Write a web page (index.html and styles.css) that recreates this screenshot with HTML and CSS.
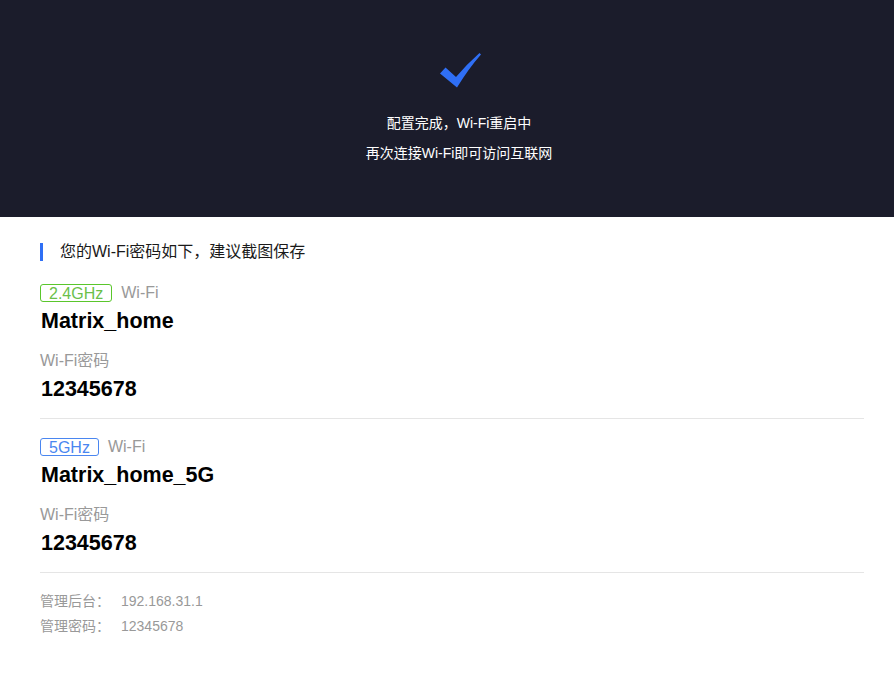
FILE: index.html
```html
<!DOCTYPE html>
<html lang="zh-CN">
<head>
<meta charset="utf-8">
<title>配置完成</title>
<link rel="stylesheet" href="styles.css">
</head>
<body>
<header class="hero">
  <svg class="check" width="44" height="40" viewBox="0 0 44 40">
    <path d="M1 21.5 L6.5 15.5 L17 25 Q28 12 40.5 1 L42 2.5 Q30 16 18 35.5 Z" fill="#2f6ff5"/>
  </svg>
  <p class="hero-line first">配置完成，Wi-Fi重启中</p>
  <p class="hero-line">再次连接Wi-Fi即可访问互联网</p>
</header>
<main class="content">
  <h2 class="title">您的Wi-Fi密码如下，建议截图保存</h2>
  <section class="group">
    <div class="band-row"><span class="badge green">2.4GHz</span><span class="band-label">Wi-Fi</span></div>
    <div class="big">Matrix_home</div>
    <div class="label">Wi-Fi密码</div>
    <div class="big pwd">12345678</div>
  </section>
  <section class="group">
    <div class="band-row"><span class="badge blue">5GHz</span><span class="band-label">Wi-Fi</span></div>
    <div class="big">Matrix_home_5G</div>
    <div class="label">Wi-Fi密码</div>
    <div class="big pwd">12345678</div>
  </section>
  <dl class="admin">
    <div class="admin-row"><dt>管理后台：</dt><dd>192.168.31.1</dd></div>
    <div class="admin-row"><dt>管理密码：</dt><dd>12345678</dd></div>
  </dl>
</main>
</body>
</html>
```
FILE: styles.css
```css
* { box-sizing: border-box; }
html, body { margin: 0; padding: 0; background: #fff; }
body { font-family: "Liberation Sans", Arial, "Noto Sans CJK SC", sans-serif; color: #000; }

.hero {
  height: 217px;
  background: #1b1c2b;
  display: flex;
  flex-direction: column;
  align-items: center;
  padding-top: 52px;
  padding-left: 24px;
}
.check { display: block; margin-left: 3px; }
.hero-line {
  margin: 0;
  color: #fff;
  font-size: 14px;
  line-height: 20px;
  height: 30px;
}
.hero-line.first { margin-top: 21px; }

.content { padding: 26px 30px 0 40px; }
.title {
  margin: 0;
  font-size: 16px;
  font-weight: normal;
  line-height: 18px;
  color: #1a1a1a;
  border-left: 3px solid #2f6ff5;
  padding-left: 17px;
}
.group {
  padding: 21px 0 14px;
  border-bottom: 1px solid #e5e5e5;
}
.group + .group { padding-top: 17px; }
.band-row { display: flex; align-items: center; height: 20px; padding-top: 1px; }
.badge {
  display: inline-block;
  border: 1px solid;
  border-radius: 3px;
  padding: 0 8px;
  font-size: 16px;
  line-height: 17px;
  height: 18px;
}
.badge.green { border-color: #5ac62c; color: #6bbf4a; }
.badge.blue { border-color: #4a86f0; color: #4a86f0; }
.band-label { margin-left: 9px; font-size: 16px; color: #999; }
.big { font-size: 21.5px; font-weight: bold; line-height: 36px; padding-left: 1px; padding-top: 1px; height: 36px; }
.label { margin-top: 10px; font-size: 16px; line-height: 24px; color: #999; padding-top: 1px; height: 24px; }
.pwd { line-height: 32px; height: 32px; }

.admin { margin: 16px 0 0; }
.admin-row { display: flex; font-size: 14px; line-height: 25px; color: #999; }
.admin-row dt { width: 81px; }
.admin-row dd { margin: 0; }
```
